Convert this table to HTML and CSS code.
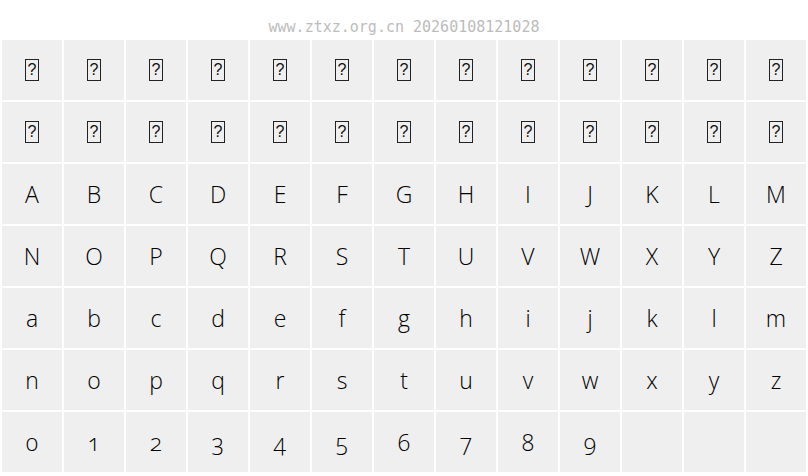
FILE: index.html
```html
<!DOCTYPE html>
<html>
<head>
<meta charset="utf-8">
<link rel="stylesheet" href="styles.css">
</head>
<body>
<div class="head">www.ztxz.org.cn 20260108121028</div>
<div class="grid">
  <div class="cell"><span class="tofu">?</span></div>
  <div class="cell"><span class="tofu">?</span></div>
  <div class="cell"><span class="tofu">?</span></div>
  <div class="cell"><span class="tofu">?</span></div>
  <div class="cell"><span class="tofu">?</span></div>
  <div class="cell"><span class="tofu">?</span></div>
  <div class="cell"><span class="tofu">?</span></div>
  <div class="cell"><span class="tofu">?</span></div>
  <div class="cell"><span class="tofu">?</span></div>
  <div class="cell"><span class="tofu">?</span></div>
  <div class="cell"><span class="tofu">?</span></div>
  <div class="cell"><span class="tofu">?</span></div>
  <div class="cell"><span class="tofu">?</span></div>
  <div class="cell"><span class="tofu">?</span></div>
  <div class="cell"><span class="tofu">?</span></div>
  <div class="cell"><span class="tofu">?</span></div>
  <div class="cell"><span class="tofu">?</span></div>
  <div class="cell"><span class="tofu">?</span></div>
  <div class="cell"><span class="tofu">?</span></div>
  <div class="cell"><span class="tofu">?</span></div>
  <div class="cell"><span class="tofu">?</span></div>
  <div class="cell"><span class="tofu">?</span></div>
  <div class="cell"><span class="tofu">?</span></div>
  <div class="cell"><span class="tofu">?</span></div>
  <div class="cell"><span class="tofu">?</span></div>
  <div class="cell"><span class="tofu">?</span></div>
  <div class="cell">A</div><div class="cell">B</div><div class="cell">C</div><div class="cell">D</div><div class="cell">E</div><div class="cell">F</div><div class="cell">G</div><div class="cell">H</div><div class="cell">I</div><div class="cell">J</div><div class="cell">K</div><div class="cell">L</div><div class="cell">M</div>
  <div class="cell">N</div><div class="cell">O</div><div class="cell">P</div><div class="cell">Q</div><div class="cell">R</div><div class="cell">S</div><div class="cell">T</div><div class="cell">U</div><div class="cell">V</div><div class="cell">W</div><div class="cell">X</div><div class="cell">Y</div><div class="cell">Z</div>
  <div class="cell">a</div><div class="cell">b</div><div class="cell">c</div><div class="cell">d</div><div class="cell">e</div><div class="cell">f</div><div class="cell">g</div><div class="cell">h</div><div class="cell">i</div><div class="cell">j</div><div class="cell">k</div><div class="cell">l</div><div class="cell">m</div>
  <div class="cell">n</div><div class="cell">o</div><div class="cell">p</div><div class="cell">q</div><div class="cell">r</div><div class="cell">s</div><div class="cell">t</div><div class="cell">u</div><div class="cell">v</div><div class="cell">w</div><div class="cell">x</div><div class="cell">y</div><div class="cell">z</div>
  <div class="cell">0</div><div class="cell">1</div><div class="cell">2</div><div class="cell">3</div><div class="cell">4</div><div class="cell">5</div><div class="cell">6</div><div class="cell">7</div><div class="cell">8</div><div class="cell">9</div><div class="cell"></div><div class="cell"></div><div class="cell"></div>
</div>
</body>
</html>
```
FILE: styles.css
```css
html, body {
  margin: 0;
  padding: 0;
  background: #ffffff;
}
.head {
  height: 38px;
  box-sizing: border-box;
  padding-top: 19px;
  text-align: center;
  font-family: "DejaVu Sans Mono", "Liberation Mono", monospace;
  font-size: 15px;
  line-height: 17px;
  color: #bcbcbc;
}
.grid {
  display: grid;
  grid-template-columns: repeat(13, 60px);
  grid-auto-rows: 60px;
  gap: 2px;
  padding: 2px;
}
.cell {
  background: #efefef;
  display: flex;
  align-items: center;
  justify-content: center;
  font-family: "Open Sans", sans-serif;
  font-size: 23px;
  font-weight: 300;
  color: #000;
  font-variant-numeric: oldstyle-nums;
  font-feature-settings: "onum" 1;
}
.tofu {
  display: inline-flex;
  align-items: center;
  justify-content: center;
  width: 12px;
  height: 20px;
  border: 1px solid #222;
  font-family: "Liberation Sans", sans-serif;
  font-size: 16px;
  font-weight: 400;
  color: #111;
  line-height: 1;
}
```
